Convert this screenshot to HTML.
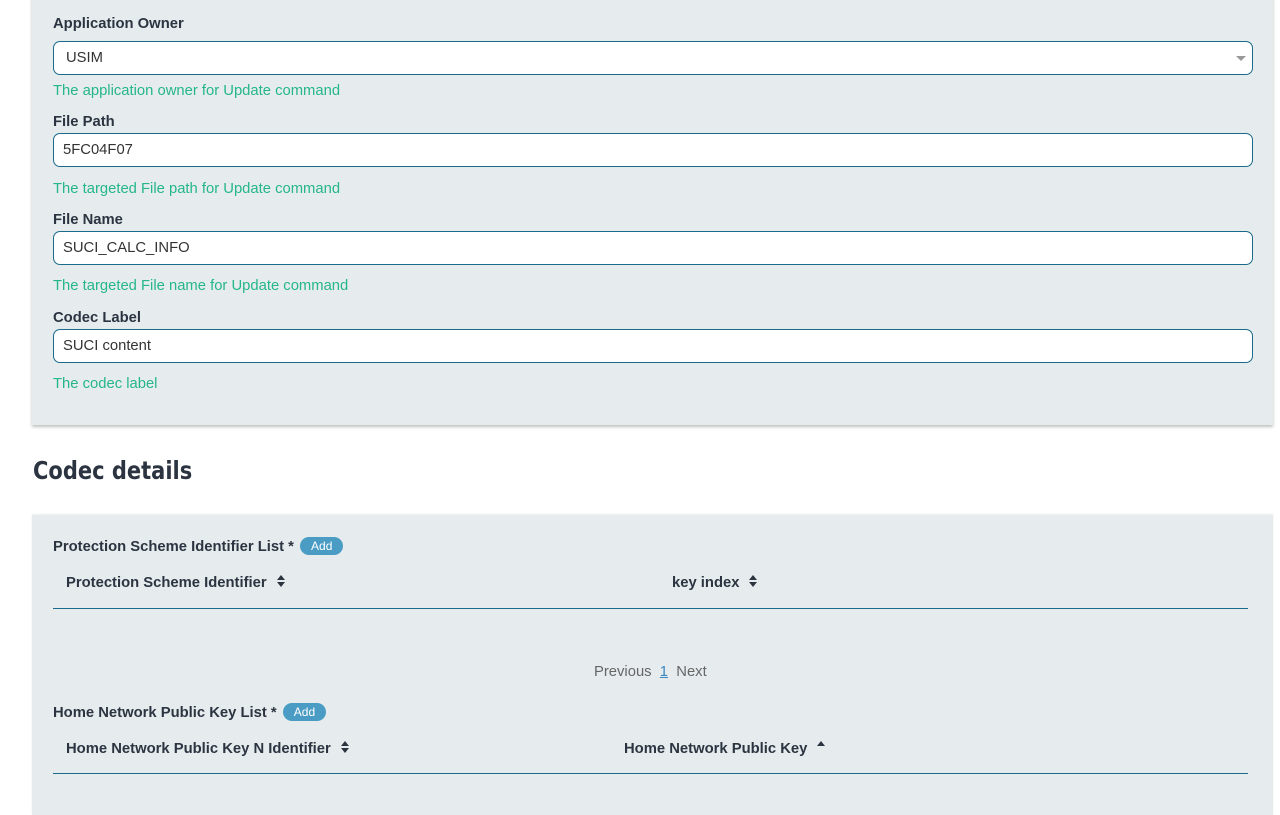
<!DOCTYPE html>
<html><head><meta charset="utf-8"><style>
*{box-sizing:border-box;margin:0;padding:0}
body{width:1280px;height:802px;overflow:hidden;background:#fff;font-family:"Liberation Sans",Arial,sans-serif;position:relative}
.panel{position:absolute;left:32px;width:1241px;background:#e6ecee}
.p1{top:-10px;height:435px;box-shadow:0 2px 3px rgba(0,0,0,.25)}
.p2{top:515px;height:300px;box-shadow:0 -1px 2px rgba(0,0,0,.08)}
.a{position:absolute}
.lbl{font-weight:bold;font-size:14.8px;color:#2b3440}
.inp{left:53px;width:1200px;height:34px;background:#fff;border:1px solid #1b6a8c;border-radius:7px;font-size:14.8px;color:#333;padding:0 9px;line-height:33px}
.help{font-size:14.8px;color:#25b68a;left:53px}
h2{position:absolute;left:33px;top:456px;font-size:25px;font-weight:bold;color:#2b3440;font-family:"DejaVu Sans",sans-serif;transform:scaleX(.84);transform-origin:0 0;white-space:nowrap}
.add{display:inline-block;background:#4a9cc4;color:#fff;font-size:12px;font-weight:normal;border-radius:10px;padding:2px 11px;margin-left:2px;vertical-align:1px}
.th{font-weight:bold;font-size:14.8px;color:#2b3440}
.line{left:53px;width:1195px;height:1px;background:#1b6a8c}
.sort{margin-left:9px;vertical-align:-1px}
</style></head><body>
<div class="panel p1"></div>
<div class="panel p2"></div>

<div class="a lbl" style="left:53px;top:16px">Application Owner</div>
<div class="a inp" style="top:41px;padding-left:12px">USIM<span style="position:absolute;right:6px;top:14px;width:0;height:0;border-left:5px solid transparent;border-right:5px solid transparent;border-top:5px solid #999"></span></div>
<div class="a help" style="top:83px">The application owner for Update command</div>

<div class="a lbl" style="left:53px;top:114px">File Path</div>
<div class="a inp" style="top:133px">5FC04F07</div>
<div class="a help" style="top:181px">The targeted File path for Update command</div>

<div class="a lbl" style="left:53px;top:212px">File Name</div>
<div class="a inp" style="top:231px">SUCI_CALC_INFO</div>
<div class="a help" style="top:278px">The targeted File name for Update command</div>

<div class="a lbl" style="left:53px;top:310px">Codec Label</div>
<div class="a inp" style="top:329px">SUCI content</div>
<div class="a help" style="top:376px">The codec label</div>

<h2>Codec details</h2>

<div class="a lbl" style="left:53px;top:537px">Protection Scheme Identifier List * <span class="add">Add</span></div>
<div class="a th" style="left:66px;top:574px">Protection Scheme Identifier<svg class="sort" width="10" height="14" viewBox="0 0 10 14"><path d="M1 6L5 1L9 6Z M1 8L5 13L9 8Z" fill="#2b3440"/></svg></div>
<div class="a th" style="left:672px;top:574px">key index<svg class="sort" width="10" height="14" viewBox="0 0 10 14"><path d="M1 6L5 1L9 6Z M1 8L5 13L9 8Z" fill="#2b3440"/></svg></div>
<div class="a line" style="top:608px"></div>

<div class="a" style="left:594px;top:664px;font-size:14.8px;color:#666">Previous&nbsp;&nbsp;<span style="color:#3a87c0;text-decoration:underline">1</span>&nbsp;&nbsp;Next</div>

<div class="a lbl" style="left:53px;top:703px">Home Network Public Key List * <span class="add">Add</span></div>
<div class="a th" style="left:66px;top:740px">Home Network Public Key N Identifier<svg class="sort" width="10" height="14" viewBox="0 0 10 14"><path d="M1 6L5 1L9 6Z M1 8L5 13L9 8Z" fill="#2b3440"/></svg></div>
<div class="a th" style="left:624px;top:740px">Home Network Public Key<svg class="sort" width="10" height="14" viewBox="0 0 10 14"><path d="M1 6L5 1L9 6Z" fill="#2b3440"/></svg></div>
<div class="a line" style="top:773px"></div>
</body></html>
